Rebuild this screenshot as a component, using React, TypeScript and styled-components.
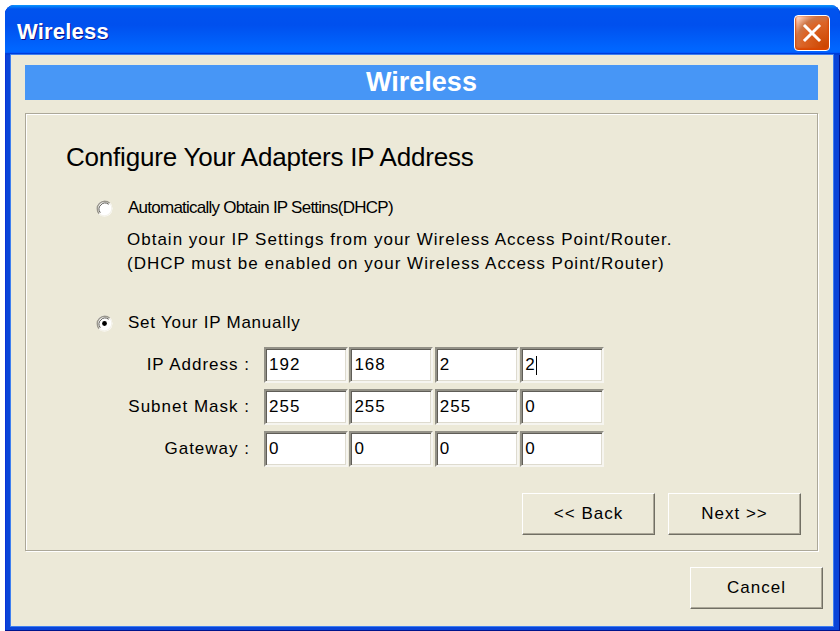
import React from "react";
import styled, { createGlobalStyle, css } from "styled-components";

const GlobalStyle = createGlobalStyle`
  * {
    box-sizing: border-box;
  }
  html,
  body {
    margin: 0;
    padding: 0;
    background: #ffffff;
  }
  body {
    font-family: "Liberation Sans", Arial, sans-serif;
  }
`;

const FONT = `"Liberation Sans", Arial, sans-serif`;

// the dialog's body text is a wide, loosely spaced sans
const uiText = css`
  font-family: ${FONT};
  font-size: 17px;
  letter-spacing: 1px;
  color: #000000;
`;

const Window = styled.div`
  margin: 5px 0 0 5px;
  width: 835px;
  height: 626px;
  display: flex;
  flex-direction: column;
  background: #0a44d8;
  border-radius: 9px 9px 0 0;
  box-shadow: inset -1px -1px #00138c, inset 1px 0 #0831d9;
  overflow: hidden;
`;

const TitleBar = styled.div`
  height: 50px;
  flex: 0 0 50px;
  display: flex;
  align-items: center;
  justify-content: space-between;
  padding: 4px 10px 0 12px;
  background: linear-gradient(
    180deg,
    #0997ff,
    #0053ee 8%,
    #0050ee 40%,
    #06f 88%,
    #06f 93%,
    #005bff 95%,
    #003dd7 96%,
    #003dd7
  );
`;

const TitleText = styled.span`
  font-family: ${FONT};
  font-weight: 700;
  font-size: 22px;
  color: #ffffff;
  letter-spacing: 0.2px;
  text-shadow: 1px 1px #0f1089;
`;

const CloseButton = styled.button`
  width: 36px;
  height: 36px;
  margin-top: 2px;
  padding: 0;
  display: flex;
  align-items: center;
  justify-content: center;
  border: 1px solid #ffffff;
  border-radius: 4px;
  background: radial-gradient(
    circle at 90% 90%,
    #cc4600 0,
    #dc6527 55%,
    #cd7546 70%,
    #ffccb2 90%,
    #fff 100%
  );
  box-shadow: inset 0 -1px 2px 1px #da4600;
  cursor: pointer;
`;

const Client = styled.div`
  flex: 1;
  margin: 0 7px 5px 6px;
  background: #ece9d8;
  box-shadow: 0 0 0 1px #3e7ff0;
  display: flex;
  flex-direction: column;
  padding: 10px 10px 16px 14px;
`;

const HeaderBar = styled.div`
  height: 35px;
  margin-right: 5px;
  background: #4796f6;
  display: flex;
  align-items: center;
  justify-content: center;
  font-family: ${FONT};
  font-weight: 700;
  font-size: 27px;
  color: #ffffff;
`;

const Group = styled.div`
  margin-top: 13px;
  margin-right: 5px;
  height: 438px;
  border: 1px solid #aca899;
  box-shadow: inset 1px 1px #ffffff, 1px 1px #ffffff;
  padding: 29px 15px 0 40px;
  display: flex;
  flex-direction: column;
`;

const Heading = styled.h1`
  margin: 0;
  font-family: ${FONT};
  font-weight: 400;
  font-size: 26px;
  letter-spacing: -0.2px;
  line-height: 28px;
  color: #000000;
`;

const RadioRow = styled.label<{ $gap: number; $tight?: boolean }>`
  ${uiText};
  margin: ${(p) => p.$gap}px 0 0 30px;
  display: flex;
  align-items: center;
  gap: 15px;
  height: 18px;
  line-height: 18px;
  letter-spacing: ${(p) => (p.$tight ? "-0.75px" : "0.75px")};
`;

const Note = styled.p`
  ${uiText};
  margin: 11px 0 0 61px;
  line-height: 24px;
`;

const Fields = styled.div`
  margin-top: 15px;
  display: flex;
  flex-direction: column;
  gap: 6px;
`;

const FieldRow = styled.div`
  display: flex;
  align-items: center;
`;

const FieldLabel = styled.span`
  ${uiText};
  width: 184px;
  margin-right: 14px;
  text-align: right;
`;

const Octets = styled.div`
  display: grid;
  grid-template-columns: repeat(4, 84px);
  column-gap: 1.4px;
`;

const Octet = styled.div`
  ${uiText};
  height: 36px;
  display: flex;
  align-items: center;
  padding-left: 3px;
  background: #ffffff;
  border: 2px solid;
  border-color: #939187 #f6f5f0 #f6f5f0 #939187;
  box-shadow: inset 1px 1px #5f5d57, inset -1px -1px #dedbcf;
`;

const Caret = styled.span`
  display: inline-block;
  width: 1px;
  height: 19px;
  background: #000000;
`;

const ButtonRow = styled.div<{ $top: number; $right: number }>`
  margin-top: ${(p) => p.$top}px;
  margin-right: ${(p) => p.$right}px;
  display: flex;
  justify-content: flex-end;
  gap: 13px;
`;

const Button = styled.button`
  ${uiText};
  width: 133px;
  height: 42px;
  padding: 0;
  background: #ece9d8;
  border: 1px solid;
  border-color: #ffffff #716f64 #716f64 #ffffff;
  box-shadow: inset -1px -1px #aca899;
  cursor: pointer;
`;

const Radio = ({ checked }: { checked?: boolean }) => (
  <svg width="17" height="17" viewBox="0 0 17 17">
    <circle cx="8.5" cy="8.5" r="8" fill="#ffffff" />
    <path
      d="M3.2 13.8 A7.5 7.5 0 0 1 13.8 3.2"
      fill="none"
      stroke="#9a978c"
      strokeWidth="1.4"
    />
    <path
      d="M4.3 12.7 A6 6 0 0 1 12.7 4.3"
      fill="none"
      stroke="#5a5852"
      strokeWidth="1"
    />
    <path
      d="M13.8 3.2 A7.5 7.5 0 0 1 3.2 13.8"
      fill="none"
      stroke="#f4f2ea"
      strokeWidth="1.2"
    />
    {checked && <circle cx="8.5" cy="8.5" r="2.4" fill="#000000" />}
  </svg>
);

const rows: { label: string; values: string[]; caret?: number }[] = [
  { label: "IP Address :", values: ["192", "168", "2", "2"], caret: 3 },
  { label: "Subnet Mask :", values: ["255", "255", "255", "0"] },
  { label: "Gateway :", values: ["0", "0", "0", "0"] },
];

const App = () => {
  return (
    <>
      <GlobalStyle />
      <Window>
        <TitleBar>
          <TitleText>Wireless</TitleText>
          <CloseButton aria-label="Close">
            <svg width="20" height="20" viewBox="0 0 20 20">
              <path
                d="M3 3 L17 17 M17 3 L3 17"
                stroke="#ffffff"
                strokeWidth="3"
                strokeLinecap="square"
              />
            </svg>
          </CloseButton>
        </TitleBar>

        <Client>
          <HeaderBar>Wireless</HeaderBar>

          <Group>
            <Heading>Configure Your Adapters IP Address</Heading>

            <RadioRow $gap={28} $tight>
              <Radio />
              Automatically Obtain IP Settins(DHCP)
            </RadioRow>
            <Note>
              Obtain your IP Settings from your Wireless Access Point/Router.
              <br />
              (DHCP must be enabled on your Wireless Access Point/Router)
            </Note>

            <RadioRow $gap={38}>
              <Radio checked />
              Set Your IP Manually
            </RadioRow>

            <Fields>
              {rows.map((row) => (
                <FieldRow key={row.label}>
                  <FieldLabel>{row.label}</FieldLabel>
                  <Octets>
                    {row.values.map((v, i) => (
                      <Octet key={i}>
                        {v}
                        {row.caret === i && <Caret />}
                      </Octet>
                    ))}
                  </Octets>
                </FieldRow>
              ))}
            </Fields>

            <ButtonRow $top={26} $right={1}>
              <Button type="button">&lt;&lt; Back</Button>
              <Button type="button">Next &gt;&gt;</Button>
            </ButtonRow>
          </Group>

          <ButtonRow $top={16} $right={0}>
            <Button type="button">Cancel</Button>
          </ButtonRow>
        </Client>
      </Window>
    </>
  );
};

export default App;
